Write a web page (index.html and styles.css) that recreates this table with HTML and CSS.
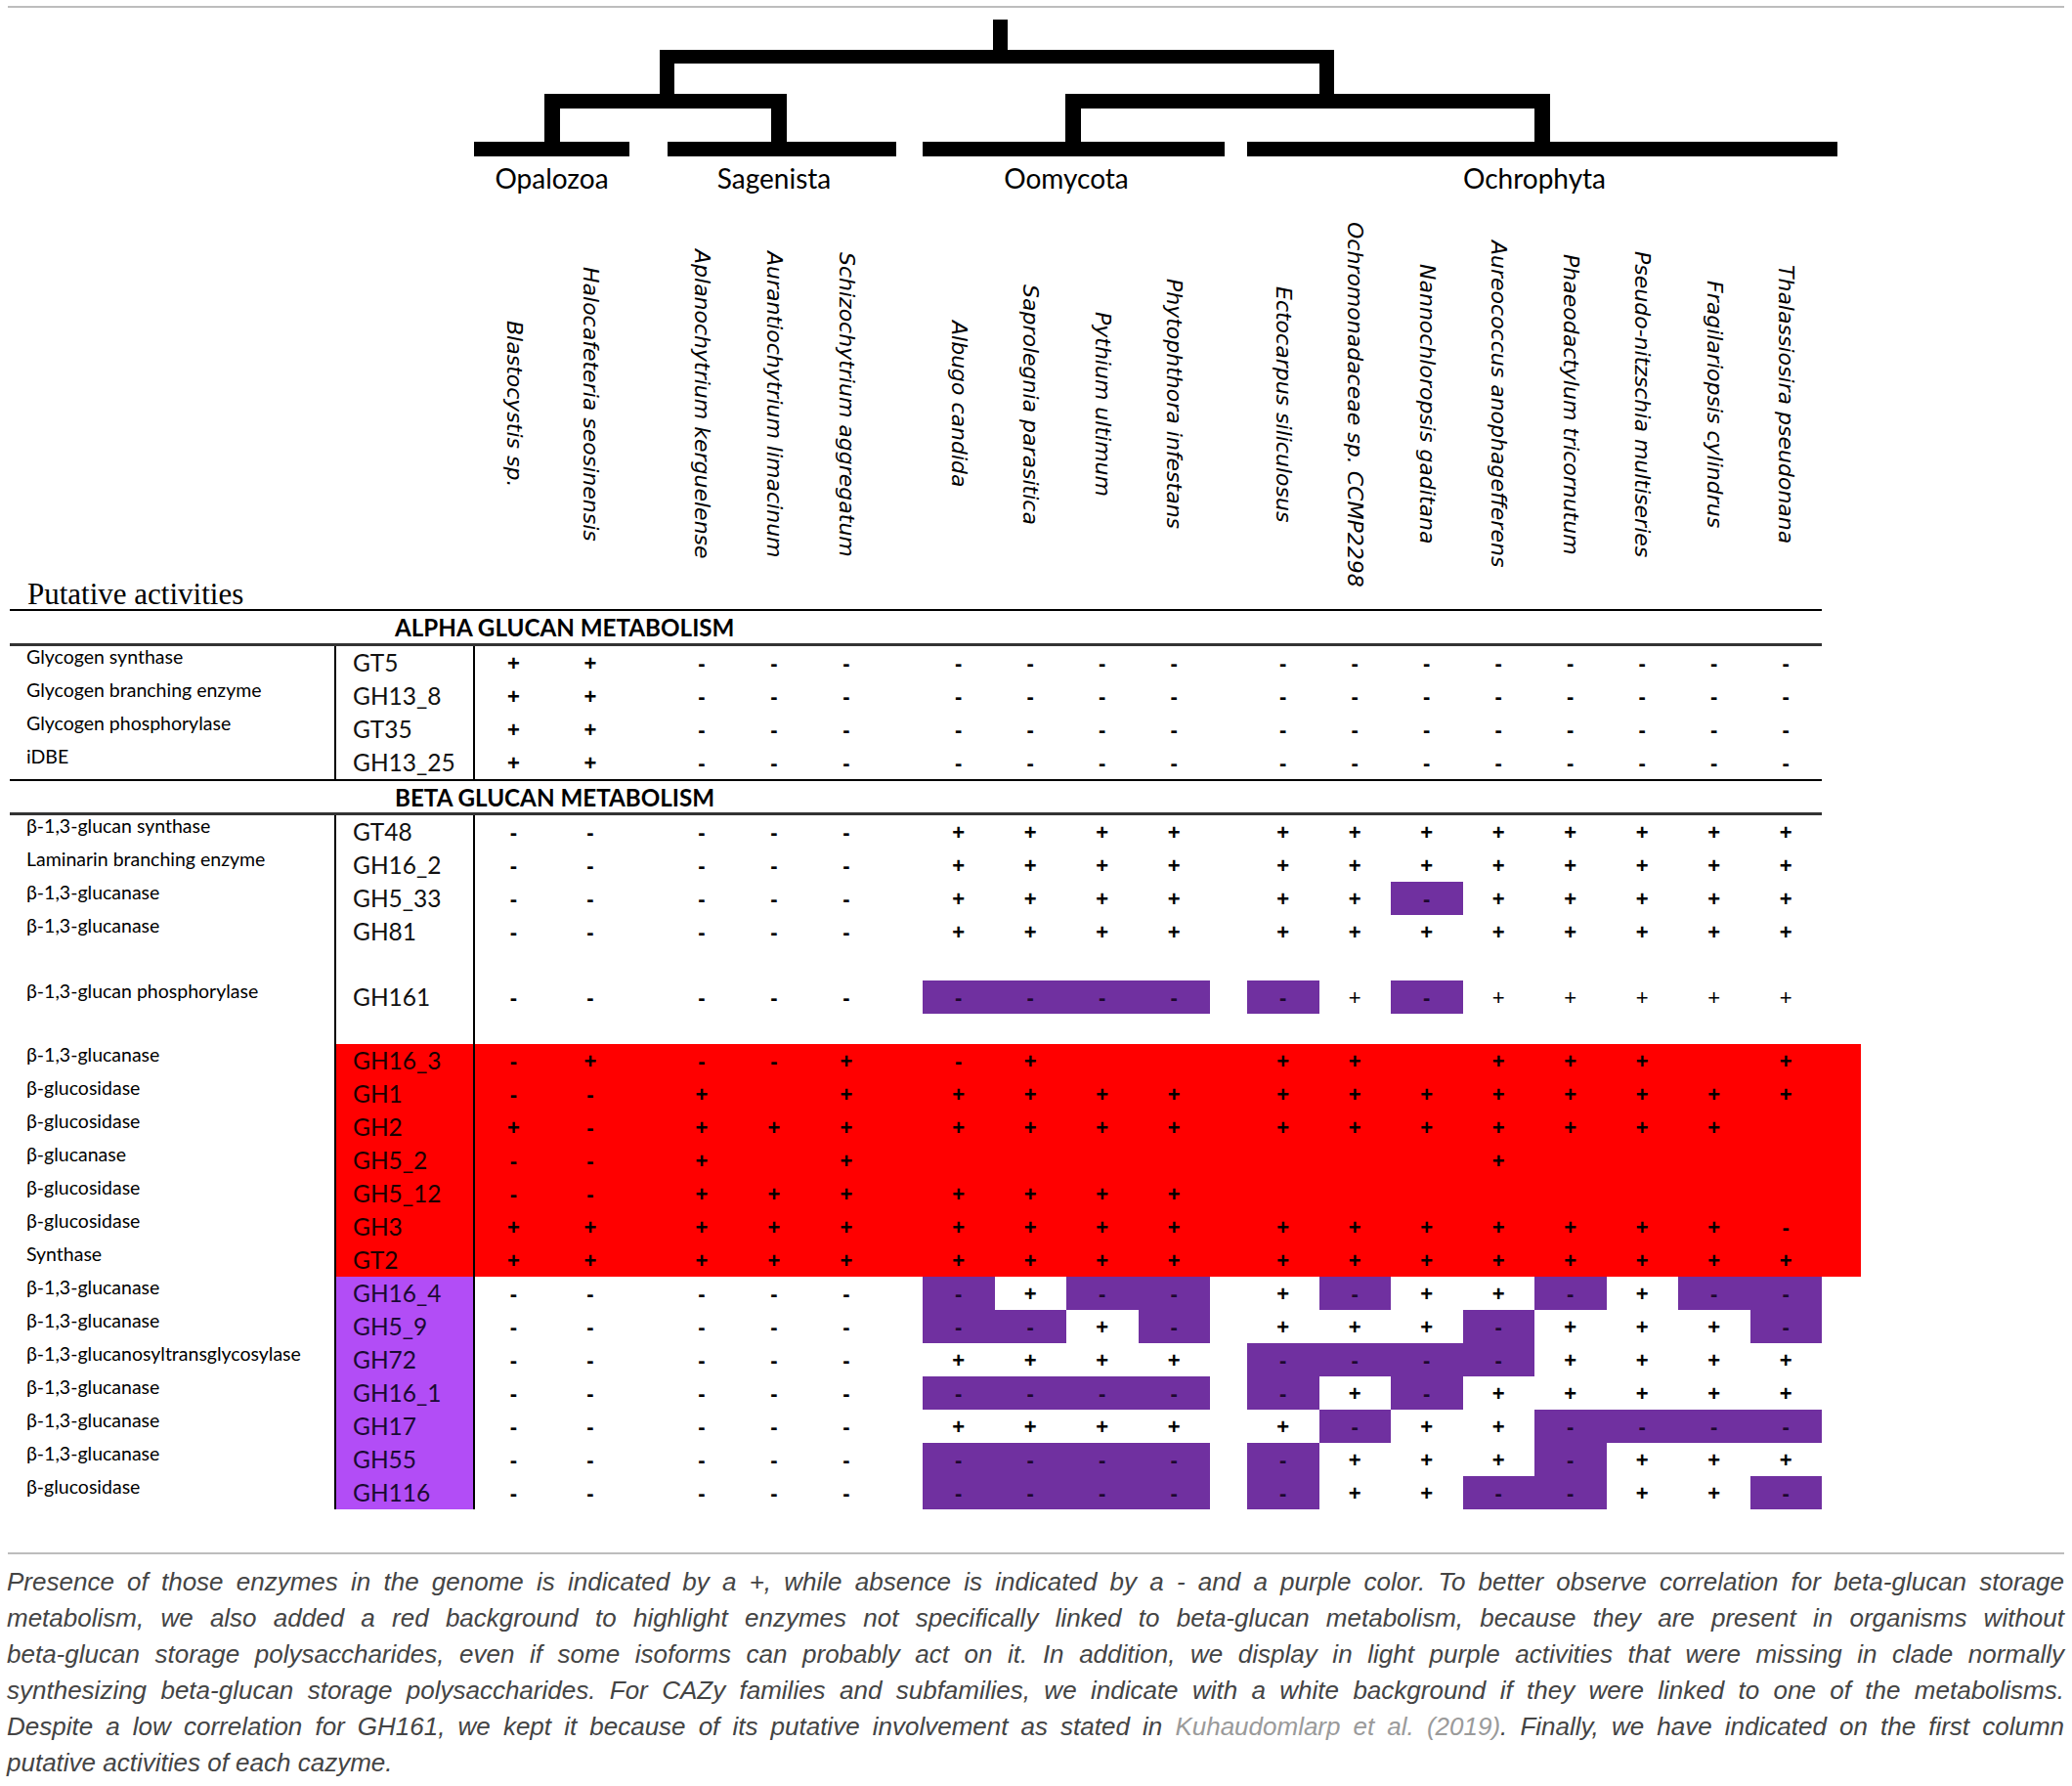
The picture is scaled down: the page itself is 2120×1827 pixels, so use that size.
FILE: index.html
```html
<!DOCTYPE html>
<html lang="en">
<head>
<meta charset="utf-8">
<title>Glucan metabolism CAZy table</title>
<link rel="stylesheet" href="styles.css">
</head>
<body>
<div class="page">
  <div class="top-rule"></div>

  <svg class="tree" viewBox="0 8 2120 152" width="2120" height="152" aria-hidden="true">
    <g fill="#000">
      <rect x="1016" y="20" width="15" height="40"/>
      <rect x="675" y="51" width="690" height="14"/>
      <rect x="675" y="51" width="15" height="57"/>
      <rect x="1350" y="51" width="15" height="57"/>
      <rect x="557" y="96" width="248" height="15"/>
      <rect x="557" y="96" width="16" height="55"/>
      <rect x="789" y="96" width="16" height="55"/>
      <rect x="1090" y="96" width="496" height="15"/>
      <rect x="1090" y="96" width="16" height="55"/>
      <rect x="1570" y="96" width="16" height="55"/>
      <rect x="485" y="145" width="159" height="15"/>
      <rect x="683" y="145" width="234" height="15"/>
      <rect x="944" y="145" width="309" height="15"/>
      <rect x="1276" y="145" width="604" height="15"/>
    </g>
  </svg>

  <div class="clades">
    <span class="clade c-opa">Opalozoa</span>
    <span class="clade c-sag">Sagenista</span>
    <span class="clade c-oom">Oomycota</span>
    <span class="clade c-och">Ochrophyta</span>
  </div>

  <div class="g species">
    <span class="putative">Putative activities</span>
    <span></span>
    <span class="sp"><span>Blastocystis sp.</span></span>
    <span class="sp"><span>Halocafeteria seosinensis</span></span>
    <span class="sp"><span>Aplanochytrium kerguelense</span></span>
    <span class="sp"><span>Aurantiochytrium limacinum</span></span>
    <span class="sp"><span>Schizochytrium aggregatum</span></span>
    <span class="sp"><span>Albugo candida</span></span>
    <span class="sp"><span>Saprolegnia parasitica</span></span>
    <span class="sp"><span>Pythium ultimum</span></span>
    <span class="sp"><span>Phytophthora infestans</span></span>
    <span class="sp"><span>Ectocarpus siliculosus</span></span>
    <span class="sp"><span>Ochromonadaceae sp. CCMP2298</span></span>
    <span class="sp"><span>Nannochloropsis gaditana</span></span>
    <span class="sp"><span>Aureococcus anophagefferens</span></span>
    <span class="sp"><span>Phaeodactylum tricornutum</span></span>
    <span class="sp"><span>Pseudo-nitzschia multiseries</span></span>
    <span class="sp"><span>Fragilariopsis cylindrus</span></span>
    <span class="sp"><span>Thalassiosira pseudonana</span></span>
  </div>

  <div class="rule-thin"></div>
  <div class="sec sec-alpha">ALPHA GLUCAN METABOLISM</div>
  <div class="rule-thick"></div>

  <div class="g row"><span class="lab">Glycogen synthase</span><span class="fam">GT5</span><span class="d">+</span><span class="d">+</span><span class="d">-</span><span class="d">-</span><span class="d">-</span><span class="d">-</span><span class="d">-</span><span class="d">-</span><span class="d">-</span><span class="d">-</span><span class="d">-</span><span class="d">-</span><span class="d">-</span><span class="d">-</span><span class="d">-</span><span class="d">-</span><span class="d">-</span></div>
  <div class="g row"><span class="lab">Glycogen branching enzyme</span><span class="fam">GH13_8</span><span class="d">+</span><span class="d">+</span><span class="d">-</span><span class="d">-</span><span class="d">-</span><span class="d">-</span><span class="d">-</span><span class="d">-</span><span class="d">-</span><span class="d">-</span><span class="d">-</span><span class="d">-</span><span class="d">-</span><span class="d">-</span><span class="d">-</span><span class="d">-</span><span class="d">-</span></div>
  <div class="g row"><span class="lab">Glycogen phosphorylase</span><span class="fam">GT35</span><span class="d">+</span><span class="d">+</span><span class="d">-</span><span class="d">-</span><span class="d">-</span><span class="d">-</span><span class="d">-</span><span class="d">-</span><span class="d">-</span><span class="d">-</span><span class="d">-</span><span class="d">-</span><span class="d">-</span><span class="d">-</span><span class="d">-</span><span class="d">-</span><span class="d">-</span></div>
  <div class="g row"><span class="lab">iDBE</span><span class="fam">GH13_25</span><span class="d">+</span><span class="d">+</span><span class="d">-</span><span class="d">-</span><span class="d">-</span><span class="d">-</span><span class="d">-</span><span class="d">-</span><span class="d">-</span><span class="d">-</span><span class="d">-</span><span class="d">-</span><span class="d">-</span><span class="d">-</span><span class="d">-</span><span class="d">-</span><span class="d">-</span></div>

  <div class="rule-thin"></div>
  <div class="sec sec-beta">BETA GLUCAN METABOLISM</div>
  <div class="rule-thick"></div>

  <div class="g row"><span class="lab">β-1,3-glucan synthase</span><span class="fam">GT48</span><span class="d">-</span><span class="d">-</span><span class="d">-</span><span class="d">-</span><span class="d">-</span><span class="d">+</span><span class="d">+</span><span class="d">+</span><span class="d">+</span><span class="d">+</span><span class="d">+</span><span class="d">+</span><span class="d">+</span><span class="d">+</span><span class="d">+</span><span class="d">+</span><span class="d">+</span></div>
  <div class="g row"><span class="lab">Laminarin branching enzyme</span><span class="fam">GH16_2</span><span class="d">-</span><span class="d">-</span><span class="d">-</span><span class="d">-</span><span class="d">-</span><span class="d">+</span><span class="d">+</span><span class="d">+</span><span class="d">+</span><span class="d">+</span><span class="d">+</span><span class="d">+</span><span class="d">+</span><span class="d">+</span><span class="d">+</span><span class="d">+</span><span class="d">+</span></div>
  <div class="g row"><span class="lab">β-1,3-glucanase</span><span class="fam">GH5_33</span><span class="d">-</span><span class="d">-</span><span class="d">-</span><span class="d">-</span><span class="d">-</span><span class="d">+</span><span class="d">+</span><span class="d">+</span><span class="d">+</span><span class="d">+</span><span class="d">+</span><span class="d p">-</span><span class="d">+</span><span class="d">+</span><span class="d">+</span><span class="d">+</span><span class="d">+</span></div>
  <div class="g row"><span class="lab">β-1,3-glucanase</span><span class="fam">GH81</span><span class="d">-</span><span class="d">-</span><span class="d">-</span><span class="d">-</span><span class="d">-</span><span class="d">+</span><span class="d">+</span><span class="d">+</span><span class="d">+</span><span class="d">+</span><span class="d">+</span><span class="d">+</span><span class="d">+</span><span class="d">+</span><span class="d">+</span><span class="d">+</span><span class="d">+</span></div>
  <div class="g row tall"><span class="lab">β-1,3-glucan phosphorylase</span><span class="fam">GH161</span><span class="d">-</span><span class="d">-</span><span class="d">-</span><span class="d">-</span><span class="d">-</span><span class="d p">-</span><span class="d p">-</span><span class="d p">-</span><span class="d p">-</span><span class="d p">-</span><span class="d t">+</span><span class="d p">-</span><span class="d t">+</span><span class="d t">+</span><span class="d t">+</span><span class="d t">+</span><span class="d t">+</span></div>

  <div class="g row red"><span class="lab">β-1,3-glucanase</span><span class="fam">GH16_3</span><span class="d">-</span><span class="d">+</span><span class="d">-</span><span class="d">-</span><span class="d">+</span><span class="d">-</span><span class="d">+</span><span class="d"></span><span class="d"></span><span class="d">+</span><span class="d">+</span><span class="d"></span><span class="d">+</span><span class="d">+</span><span class="d">+</span><span class="d"></span><span class="d">+</span></div>
  <div class="g row red"><span class="lab">β-glucosidase</span><span class="fam">GH1</span><span class="d">-</span><span class="d">-</span><span class="d">+</span><span class="d"></span><span class="d">+</span><span class="d">+</span><span class="d">+</span><span class="d">+</span><span class="d">+</span><span class="d">+</span><span class="d">+</span><span class="d">+</span><span class="d">+</span><span class="d">+</span><span class="d">+</span><span class="d">+</span><span class="d">+</span></div>
  <div class="g row red"><span class="lab">β-glucosidase</span><span class="fam">GH2</span><span class="d">+</span><span class="d">-</span><span class="d">+</span><span class="d">+</span><span class="d">+</span><span class="d">+</span><span class="d">+</span><span class="d">+</span><span class="d">+</span><span class="d">+</span><span class="d">+</span><span class="d">+</span><span class="d">+</span><span class="d">+</span><span class="d">+</span><span class="d">+</span><span class="d"></span></div>
  <div class="g row red"><span class="lab">β-glucanase</span><span class="fam">GH5_2</span><span class="d">-</span><span class="d">-</span><span class="d">+</span><span class="d"></span><span class="d">+</span><span class="d"></span><span class="d"></span><span class="d"></span><span class="d"></span><span class="d"></span><span class="d"></span><span class="d"></span><span class="d">+</span><span class="d"></span><span class="d"></span><span class="d"></span><span class="d"></span></div>
  <div class="g row red"><span class="lab">β-glucosidase</span><span class="fam">GH5_12</span><span class="d">-</span><span class="d">-</span><span class="d">+</span><span class="d">+</span><span class="d">+</span><span class="d">+</span><span class="d">+</span><span class="d">+</span><span class="d">+</span><span class="d"></span><span class="d"></span><span class="d"></span><span class="d"></span><span class="d"></span><span class="d"></span><span class="d"></span><span class="d"></span></div>
  <div class="g row red"><span class="lab">β-glucosidase</span><span class="fam">GH3</span><span class="d">+</span><span class="d">+</span><span class="d">+</span><span class="d">+</span><span class="d">+</span><span class="d">+</span><span class="d">+</span><span class="d">+</span><span class="d">+</span><span class="d">+</span><span class="d">+</span><span class="d">+</span><span class="d">+</span><span class="d">+</span><span class="d">+</span><span class="d">+</span><span class="d">-</span></div>
  <div class="g row red"><span class="lab">Synthase</span><span class="fam">GT2</span><span class="d">+</span><span class="d">+</span><span class="d">+</span><span class="d">+</span><span class="d">+</span><span class="d">+</span><span class="d">+</span><span class="d">+</span><span class="d">+</span><span class="d">+</span><span class="d">+</span><span class="d">+</span><span class="d">+</span><span class="d">+</span><span class="d">+</span><span class="d">+</span><span class="d">+</span></div>

  <div class="g row"><span class="lab">β-1,3-glucanase</span><span class="fam lp">GH16_4</span><span class="d">-</span><span class="d">-</span><span class="d">-</span><span class="d">-</span><span class="d">-</span><span class="d p">-</span><span class="d">+</span><span class="d p">-</span><span class="d p">-</span><span class="d">+</span><span class="d p">-</span><span class="d">+</span><span class="d">+</span><span class="d p">-</span><span class="d">+</span><span class="d p">-</span><span class="d p">-</span></div>
  <div class="g row"><span class="lab">β-1,3-glucanase</span><span class="fam lp">GH5_9</span><span class="d">-</span><span class="d">-</span><span class="d">-</span><span class="d">-</span><span class="d">-</span><span class="d p">-</span><span class="d p">-</span><span class="d">+</span><span class="d p">-</span><span class="d">+</span><span class="d">+</span><span class="d">+</span><span class="d p">-</span><span class="d">+</span><span class="d">+</span><span class="d">+</span><span class="d p">-</span></div>
  <div class="g row"><span class="lab">β-1,3-glucanosyltransglycosylase</span><span class="fam lp">GH72</span><span class="d">-</span><span class="d">-</span><span class="d">-</span><span class="d">-</span><span class="d">-</span><span class="d">+</span><span class="d">+</span><span class="d">+</span><span class="d">+</span><span class="d p">-</span><span class="d p">-</span><span class="d p">-</span><span class="d p">-</span><span class="d">+</span><span class="d">+</span><span class="d">+</span><span class="d">+</span></div>
  <div class="g row"><span class="lab">β-1,3-glucanase</span><span class="fam lp">GH16_1</span><span class="d">-</span><span class="d">-</span><span class="d">-</span><span class="d">-</span><span class="d">-</span><span class="d p">-</span><span class="d p">-</span><span class="d p">-</span><span class="d p">-</span><span class="d p">-</span><span class="d">+</span><span class="d p">-</span><span class="d">+</span><span class="d">+</span><span class="d">+</span><span class="d">+</span><span class="d">+</span></div>
  <div class="g row"><span class="lab">β-1,3-glucanase</span><span class="fam lp">GH17</span><span class="d">-</span><span class="d">-</span><span class="d">-</span><span class="d">-</span><span class="d">-</span><span class="d">+</span><span class="d">+</span><span class="d">+</span><span class="d">+</span><span class="d">+</span><span class="d p">-</span><span class="d">+</span><span class="d">+</span><span class="d p">-</span><span class="d p">-</span><span class="d p">-</span><span class="d p">-</span></div>
  <div class="g row"><span class="lab">β-1,3-glucanase</span><span class="fam lp">GH55</span><span class="d">-</span><span class="d">-</span><span class="d">-</span><span class="d">-</span><span class="d">-</span><span class="d p">-</span><span class="d p">-</span><span class="d p">-</span><span class="d p">-</span><span class="d p">-</span><span class="d">+</span><span class="d">+</span><span class="d">+</span><span class="d p">-</span><span class="d">+</span><span class="d">+</span><span class="d">+</span></div>
  <div class="g row"><span class="lab">β-glucosidase</span><span class="fam lp">GH116</span><span class="d">-</span><span class="d">-</span><span class="d">-</span><span class="d">-</span><span class="d">-</span><span class="d p">-</span><span class="d p">-</span><span class="d p">-</span><span class="d p">-</span><span class="d p">-</span><span class="d">+</span><span class="d">+</span><span class="d p">-</span><span class="d p">-</span><span class="d">+</span><span class="d">+</span><span class="d p">-</span></div>

  <div class="cap-rule"></div>
  <p class="caption">
    <span>Presence of those enzymes in the genome is indicated by a +, while absence is indicated by a - and a purple color. To better observe correlation for beta-glucan storage</span>
    <span>metabolism, we also added a red background to highlight enzymes not specifically linked to beta-glucan metabolism, because they are present in organisms without</span>
    <span>beta-glucan storage polysaccharides, even if some isoforms can probably act on it. In addition, we display in light purple activities that were missing in clade normally</span>
    <span>synthesizing beta-glucan storage polysaccharides. For CAZy families and subfamilies, we indicate with a white background if they were linked to one of the metabolisms.</span>
    <span>Despite a low correlation for GH161, we kept it because of its putative involvement as stated in <a class="ref" href="#">Kuhaudomlarp et al. (2019)</a>. Finally, we have indicated on the first column</span>
    <span class="last">putative activities of each cazyme.</span>
  </p>
</div>
</body>
</html>
```
FILE: styles.css
```css
:root {
  --cols: 342px 144px 79px 78px 38px 74px 74px 74px 41px 73.5px 73.5px 73.5px 73.5px 38px repeat(8, 73.5px) 40px;
}
html, body {
  margin: 0;
  padding: 0;
  background: #fff;
}
.page {
  width: 2120px;
  color: #000;
}
.top-rule {
  height: 2px;
  background: #bdbdbd;
  margin: 6px 8px 0 8px;
}
.tree {
  display: block;
}
.clades {
  display: grid;
  grid-template-columns: var(--cols);
  width: 1904px;
  height: 44px;
  font-family: Lato, "Liberation Sans", sans-serif;
  font-size: 28px;
  line-height: 44px;
}
.clade { text-align: center; }
.c-opa { grid-column: 3 / 5; }
.c-sag { grid-column: 6 / 9; }
.c-oom { grid-column: 10 / 14; }
.c-och { grid-column: 15 / 23; }

.g {
  display: grid;
  grid-template-columns: var(--cols);
  width: 1904px;
}
.g > :nth-child(5) { grid-column-start: 6; }
.g > :nth-child(8) { grid-column-start: 10; }
.g > :nth-child(12) { grid-column-start: 15; }

.species {
  height: 419px;
}
.putative {
  align-self: end;
  padding-left: 28px;
  font-family: "Liberation Serif", serif;
  font-size: 31px;
  line-height: 30px;
  white-space: nowrap;
}
.sp {
  display: flex;
  align-items: center;
  justify-content: center;
}
.sp > span {
  writing-mode: vertical-rl;
  font-family: "DejaVu Sans", sans-serif;
  font-style: italic;
  font-size: 22px;
  line-height: 26px;
  white-space: nowrap;
}

.rule-thin {
  height: 2px;
  background: #000;
  margin-left: 10px;
  width: 1854px;
}
.rule-thick {
  height: 3px;
  background: #333;
  margin-left: 10px;
  width: 1854px;
}
.sec {
  padding-left: 404px;
  font-family: Lato, "Liberation Sans", sans-serif;
  font-weight: 700;
  font-size: 24.2px;
}
.sec-alpha { height: 33px; line-height: 33px; }
.sec-beta { height: 32px; line-height: 33px; }

.row {
  height: 34px;
}
.lab {
  padding-left: 27px;
  font-family: Lato, "Liberation Sans", sans-serif;
  font-size: 19.5px;
  line-height: 22px;
  white-space: nowrap;
}
.fam {
  box-sizing: border-box;
  border-left: 2px solid #000;
  border-right: 2px solid #000;
  padding-left: 17px;
  font-family: Lato, "Liberation Sans", sans-serif;
  font-size: 24.5px;
  line-height: 34px;
  color: #111;
}
.fam.lp {
  background: #b24df6;
  color: #1a0a33;
}
.d {
  box-sizing: border-box;
  padding-top: 2px;
  text-align: center;
  font-family: "Liberation Sans", sans-serif;
  font-weight: 700;
  font-size: 22px;
  line-height: 32px;
}
.d.p {
  background: #7030a0;
  color: #1d0830;
}
.d.t {
  font-weight: 400;
}
.row.red {
  background: linear-gradient(90deg, transparent 342px, #ff0000 342px);
}
.row.red .fam {
  color: #1a0000;
}
.row.tall {
  height: 98px;
}
.row.tall > .d {
  margin: 33px 0 31px;
}
.row.tall > .lab,
.row.tall > .fam {
  padding-top: 33px;
}

.cap-rule {
  height: 2px;
  background: #bdbdbd;
  margin: 44px 8px 10px 8px;
}
.caption {
  margin: 0 8px 0 7px;
  font-family: "Liberation Sans", Arial, sans-serif;
  font-style: italic;
  font-size: 26px;
  line-height: 37px;
  color: #444;
}
.caption > span {
  display: block;
  text-align: justify;
  text-align-last: justify;
  white-space: nowrap;
}
.caption > span.last {
  text-align-last: left;
}
.ref {
  color: #9a9a9a;
  text-decoration: none;
}
```
